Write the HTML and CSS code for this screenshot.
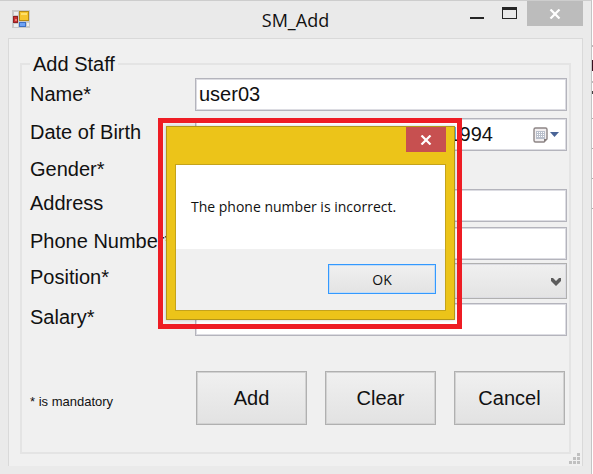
FILE: index.html
```html
<!DOCTYPE html>
<html lang="en">
<head>
<meta charset="utf-8">
<title>SM_Add</title>
<link rel="stylesheet" href="styles.css">
</head>
<body>
<main class="window">
  <header class="titlebar">
    <svg class="app-icon" width="18" height="18" viewBox="0 0 18 18" aria-hidden="true">
      <rect width="18" height="18" fill="#c9c9c9"/>
      <path d="M2 2h4v3H2zM2 14h4v3H2zM15 13h2v3h-2z" fill="#eee"/>
      <rect x="7.500" y="1.500" width="9" height="9" fill="#f6c52c" stroke="#b58a16"/>
      <path d="M9 3h6v2H9z" fill="#ffe06a"/>
      <rect x="1.500" y="6.500" width="4" height="6" fill="#c93030" stroke="#8f2222"/>
      <path d="M3 9h2v2H3z" fill="#f07a70"/>
      <rect x="7.500" y="12.500" width="6" height="4" fill="#6ea2f5" stroke="#3c6fc4"/>
    </svg>
    <h1 class="title">SM_Add</h1>
    <div class="controls">
      <button class="control" type="button" aria-label="Minimize">
        <svg width="14" height="20" viewBox="0 0 14 20"><path d="M0 16h14v2H0z" fill="#262626"/></svg>
      </button>
      <button class="control" type="button" aria-label="Maximize">
        <svg width="15" height="20" viewBox="0 0 15 20"><path d="M0 6h15v12H0zM1 9v8h13v-8z" fill="#262626" fill-rule="evenodd"/></svg>
      </button>
      <button class="control control-close" type="button" aria-label="Close">
        <svg width="12" height="10" viewBox="0 0 12 10"><path d="M1.500 .5l9 9M10.500 .5l-9 9" stroke="#fff" stroke-width="2.200"/></svg>
      </button>
    </div>
  </header>

  <div class="client">
    <form class="form">
      <fieldset class="group">
        <legend class="legend">Add Staff</legend>
        <div class="fields">
          <label class="label label-middle" for="name">Name*</label>
          <input class="field" id="name" type="text" value="user03">

          <label class="label" for="birth">Date of Birth</label>
          <div class="field date">
            <input class="date-input" id="birth" type="text" value="1994">
            <button class="date-button" type="button" aria-label="Open calendar">
              <svg width="28" height="18" viewBox="0 0 28 18">
                <path d="M3.500 2h10q1.500 0 1.500 1.500V13l-3 3H3.500Q2 16 2 14.500v-11Q2 2 3.500 2z" fill="#f2eff0" stroke="#8d8585" stroke-width="1.400"/>
                <path d="M4 5h9v8H4z" fill="#b9bfcb"/>
                <path d="M5 6h1v1H5zM7 6h1v1H7zM9 6h1v1H9zM11 6h1v1h-1zM5 8h1v1H5zM7 8h1v1H7zM9 8h1v1H9zM11 8h1v1h-1zM5 10h1v1H5zM7 10h1v1H7zM9 10h1v1H9zM11 10h1v1h-1z" fill="#fff"/>
                <path d="M15 13h-3v3z" fill="#857d7d"/>
                <path d="M18 6h9l-4.500 5z" fill="#4a6496"/>
              </svg>
            </button>
          </div>

          <span class="label">Gender*</span>
          <span></span>

          <label class="label" for="address">Address</label>
          <input class="field" id="address" type="text">

          <label class="label" for="phone">Phone Number*</label>
          <input class="field" id="phone" type="text">

          <label class="label" for="position">Position*</label>
          <div class="select-wrap">
            <select class="field select" id="position"><option></option></select>
            <svg class="chevron" width="10" height="8" viewBox="0 0 10 8" aria-hidden="true"><path d="M0 0h2l3 3 3-3h2v3L5 8 0 3z" fill="#5c5c5c"/></svg>
          </div>

          <label class="label" for="salary">Salary*</label>
          <input class="field" id="salary" type="text">
        </div>

        <div class="footer">
          <span class="note">* is mandatory</span>
          <div class="actions">
            <button class="action" type="button">Add</button>
            <button class="action" type="button">Clear</button>
            <button class="action" type="button">Cancel</button>
          </div>
        </div>
      </fieldset>
    </form>
    <svg class="grip" width="11" height="11" viewBox="0 0 11 11" aria-hidden="true"><path d="M8 0h3v3H8zM4 4h3v3H4zM8 4h3v3H8zM0 8h3v3H0zM4 8h3v3H4zM8 8h3v3H8z" fill="#c0c0c0"/></svg>
  </div>

  <div class="highlight">
    <section class="dialog" role="alertdialog" aria-labelledby="message">
      <header class="dialog-bar">
        <button class="dialog-close" type="button" aria-label="Close message">
          <svg width="12" height="10" viewBox="0 0 12 10"><path d="M1.500 .5l9 9M10.500 .5l-9 9" stroke="#fff" stroke-width="2.200"/></svg>
        </button>
      </header>
      <div class="dialog-body">
        <p class="message" id="message">The phone number is incorrect.</p>
        <div class="dialog-actions">
          <button class="ok" type="button">OK</button>
        </div>
      </div>
    </section>
  </div>
</main>
</body>
</html>
```
FILE: styles.css
```css
* {
  box-sizing: border-box;
}

/* The 1px strip right of the window shows the edge of the content behind it */
body {
  margin: 0;
  padding-right: 1px;
  background: linear-gradient(
    #fff 45px, #bbb 45px 47px, #fff 47px 60px, #3a1020 60px 71px,
    #fff 71px 81px, #bbb 81px 83px, #fff 83px 91px, #444 91px 94px,
    #fff 94px 118px, #aaa 118px 119px, #fff 119px 148px, #aaa 148px 149px,
    #fff 149px 178px, #aaa 178px 179px, #fff 179px 208px, #aaa 208px 209px,
    #fff 209px);
  font-family: "Liberation Sans", Arial, sans-serif;
  font-size: 20px;
  color: #111;
}

button,
input,
select {
  margin: 0;
  font: inherit;
  color: inherit;
}

svg {
  display: block;
}

.window {
  position: relative;
  padding: 0 8px 8px;
  background: #eaeaea;
  border-top: 1px solid #cdcdcd;
  border-right: 1px solid #c4c4c4;
}

/* Title bar */
.titlebar {
  display: grid;
  grid-template-columns: 1fr auto 1fr;
  height: 37px;
}

.app-icon {
  margin: 9px 0 0 4px;
}

.title {
  margin: 0;
  font: 18px/38px "Open Sans", sans-serif;
}

.controls {
  display: flex;
  justify-content: flex-end;
  align-items: flex-start;
}

.control {
  display: flex;
  justify-content: center;
  width: 32px;
  padding: 0;
  border: 0;
  background: none;
}

.control-close {
  align-items: center;
  width: 56px;
  height: 25px;
  margin-left: 2px;
  background: #bcbcbc;
}

/* Form */
.client {
  position: relative;
  padding: 14px 11px 12px;
  background: #f0f0f0;
  border: 1px solid #d9d9d9;
  border-bottom: 0;
}

.group {
  min-width: 0;
  margin: 0;
  padding: 3px 2px 27px 8px;
  border: 2px solid #e4e4e4;
}

.legend {
  padding: 0 3px;
  line-height: 22px;
}

.fields {
  display: grid;
  grid-template-columns: 165px 1fr;
  grid-template-rows: 40px 37px 34px 38px 36px 40px 33px;
  align-items: start;
}

.label {
  line-height: 28px;
  white-space: nowrap;
}

.label-middle {
  line-height: 32px;
}

.field {
  width: 100%;
  height: 33px;
  padding: 0 3px;
  background: #fff;
  border: 1px solid #b4b4bc;
  border-radius: 0;
  box-shadow: inset 0 0 0 1px #dcdce2;
}

.date {
  display: flex;
  align-items: center;
}

.date-input {
  flex: 1;
  min-width: 0;
  padding: 0 36px 0 0;
  border: 0;
  background: none;
  text-align: right;
}

.date-button {
  padding: 0 3px;
  border: 0;
  background: none;
}

.select-wrap {
  position: relative;
}

.select {
  height: 36px;
  appearance: none;
  background: linear-gradient(#f0f0f0, #e3e3e3);
  border-color: #b0b0b0;
}

.chevron {
  position: absolute;
  right: 6px;
  top: 15px;
}

.footer {
  display: grid;
  grid-template-columns: 165px 1fr;
  align-items: center;
  margin-top: 35px;
}

.note {
  font-size: 13px;
  padding-top: 6px;
}

.actions {
  display: flex;
  justify-content: space-between;
  padding: 0 2px 0 1px;
}

.action {
  width: 111px;
  height: 54px;
  padding: 0;
  background: linear-gradient(#f0f0f0, #e2e2e2);
  border: 1px solid #b0b0b0;
  box-shadow: inset 0 0 0 1px #d2d2d2;
}

.grip {
  position: absolute;
  right: 2px;
  bottom: 2px;
}

/* Message box */
.highlight {
  position: absolute;
  left: 158px;
  top: 117px;
  padding: 3px 2px 4px 3px;
  border: 5px solid #ee1c24;
}

.dialog {
  width: 289px;
  padding: 0 8px 8px;
  background: #ecc419;
  border: 1px solid #b3961a;
  box-shadow: 0 0 3px rgba(0, 0, 0, 0.2);
}

.dialog-bar {
  display: flex;
  justify-content: flex-end;
  height: 37px;
}

.dialog-close {
  display: flex;
  align-items: center;
  justify-content: center;
  width: 40px;
  height: 25px;
  padding: 0;
  border: 0;
  background: #c75050;
}

.dialog-body {
  background: #f0f0f0;
  border: 1px solid #c4a31b;
}

.message {
  margin: 0;
  padding: 0 15px;
  background: #fff;
  font: 14px/84px "Open Sans", sans-serif;
  white-space: nowrap;
}

.dialog-actions {
  display: flex;
  justify-content: flex-end;
  padding: 15px 9px 16px;
}

.ok {
  width: 108px;
  height: 30px;
  padding: 0;
  background: linear-gradient(#f0f0f0, #e3e3e3);
  border: 1px solid #3399ff;
  box-shadow: inset 0 0 0 1px #c5ddf5;
  font: 14px "Open Sans", sans-serif;
}
```
